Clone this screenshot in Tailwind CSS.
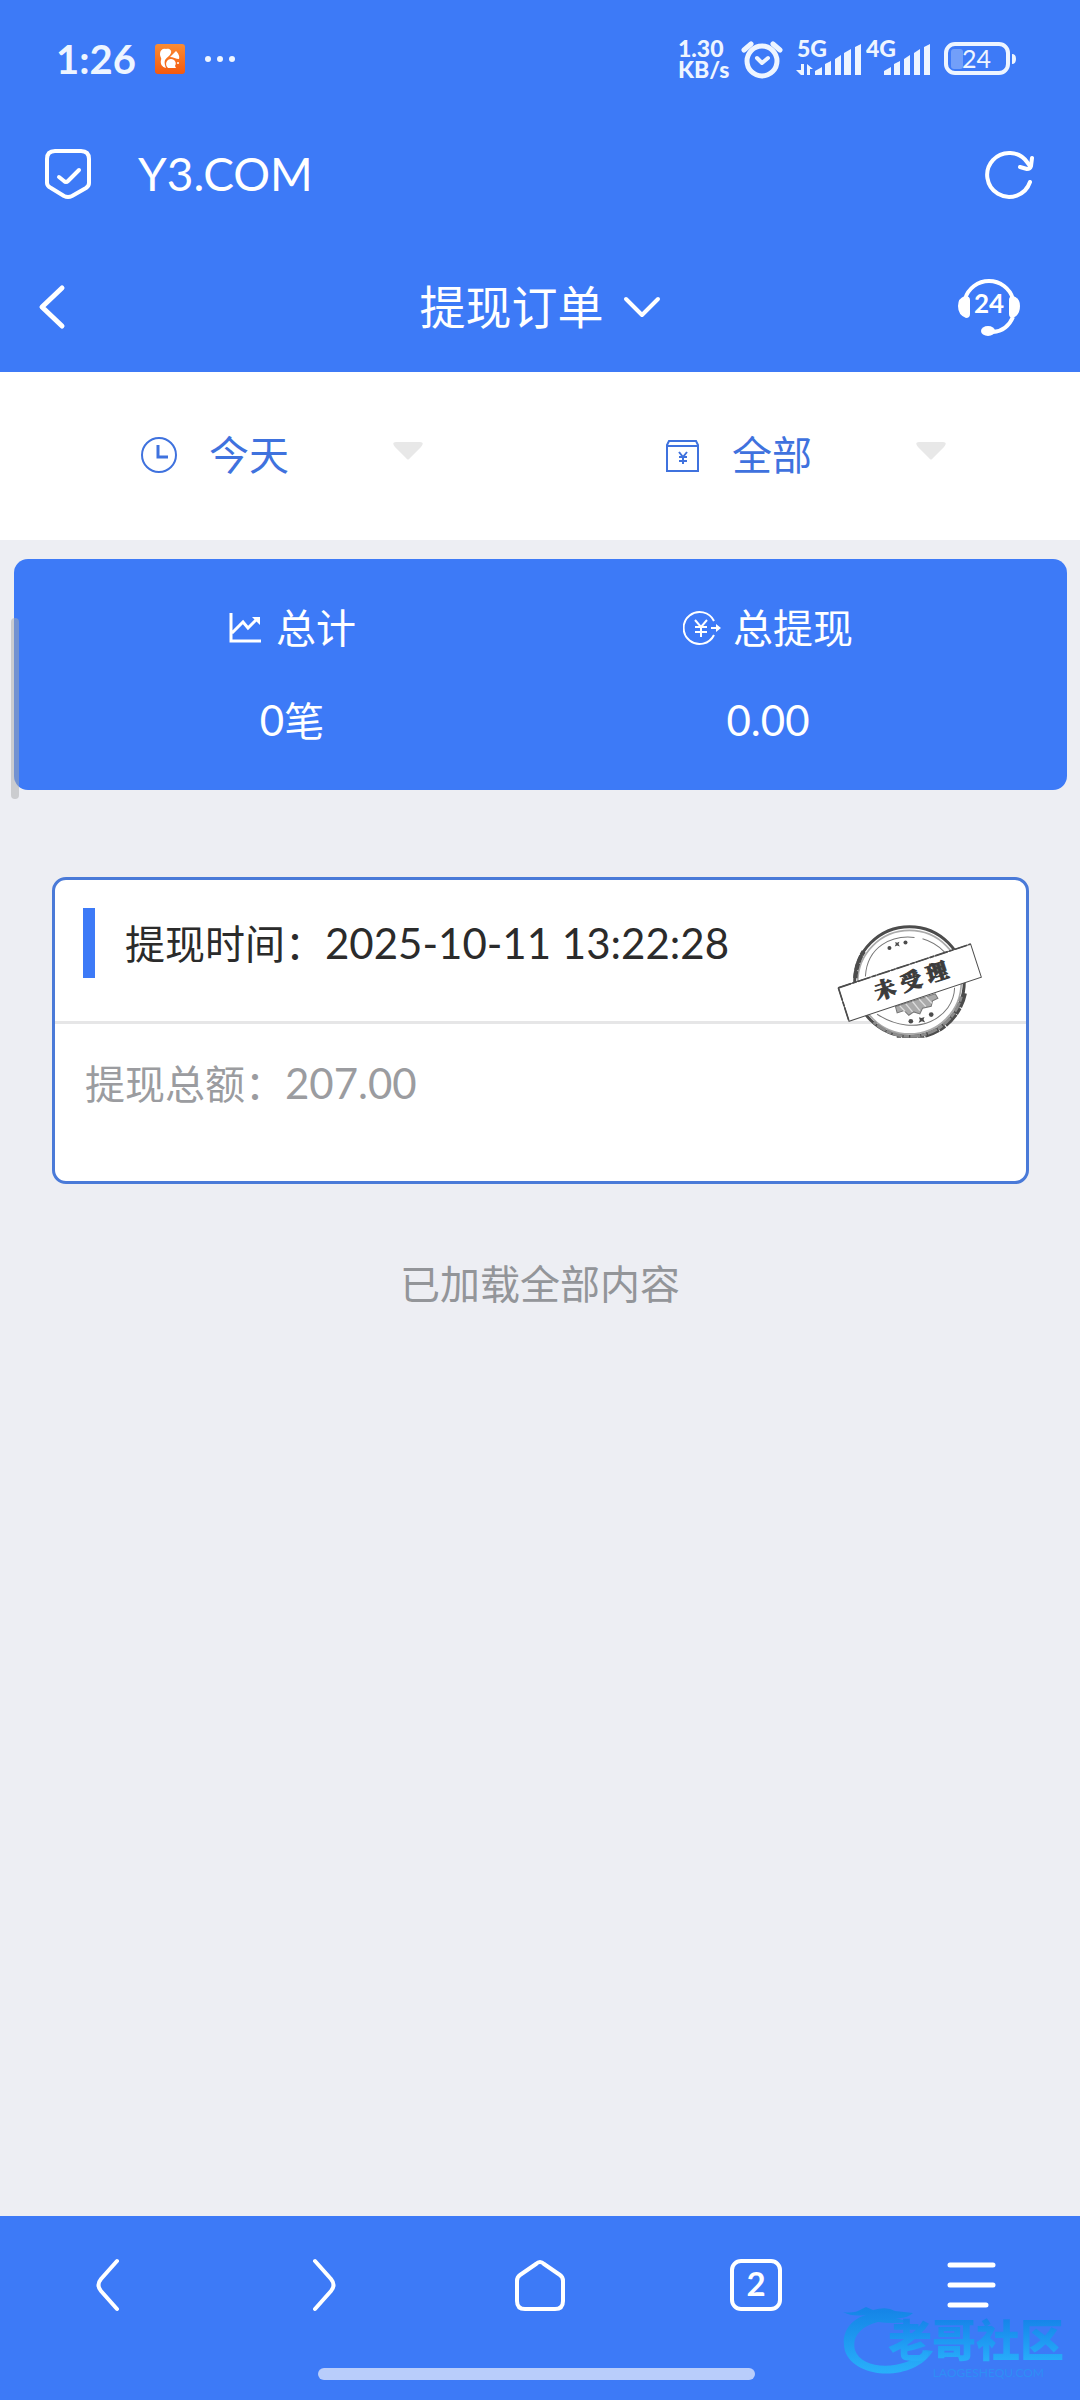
<!DOCTYPE html>
<html lang="zh-CN">
<head>
<meta charset="utf-8">
<meta name="viewport" content="width=device-width, initial-scale=1">
<title>提现订单</title>
<script src="https://cdn.jsdelivr.net/npm/@tailwindcss/browser@4"></script>
</head>
<body class="flex min-h-screen flex-col bg-[#edeef3] font-[Lato,'Noto_Sans_CJK_SC',sans-serif] text-[40px] leading-[60px] text-white">

<header class="bg-[#3d7af7]">
  <!-- status bar -->
  <div class="flex h-[118px] items-center pl-[56px] pr-[64px] text-[#eef5ff]">
    <time class="w-[77px] text-[40px] font-bold">1:26</time>
    <svg class="ml-[22px] size-[30px]" viewBox="0 0 30 30" aria-hidden="true">
      <defs><linearGradient id="uc" x1="0" y1="0" x2="0" y2="1"><stop offset="0" stop-color="#fb8c33"/><stop offset="1" stop-color="#f4590f"/></linearGradient></defs>
      <rect width="30" height="30" rx="3" fill="url(#uc)"/>
      <path d="M5 10C5 6 8 4 11 5C14 4 17 6 16 9C15 12 12 13 10 16C9 19 10 21 11 24C7 23 5 20 6 16C7 14 5 13 5 10Z" fill="#fff"/>
      <path d="M15 13L21 7C23 9 25 12 24 15C21 15 18 13 15 13Z" fill="#fff"/>
      <path d="M13 24C9 20 12 15 16 15C20 15 22 19 20 22L21 24Z" fill="#fff"/>
      <circle cx="23" cy="19" r="1" fill="#fff"/>
    </svg>
    <svg class="ml-[19px] h-[8px] w-[32px]" viewBox="0 0 32 8" fill="currentColor" aria-hidden="true"><circle cx="4" cy="4" r="3"/><circle cx="16" cy="4" r="3"/><circle cx="28" cy="4" r="3"/></svg>
    <div class="ml-auto w-[62px] text-[23px] leading-[21px] font-black">1.30<br>KB/s</div>
    <svg class="h-[42px] w-[44px]" viewBox="0 0 44 42" fill="none" stroke="currentColor" stroke-width="5" stroke-linecap="round" stroke-linejoin="round" aria-label="闹钟"><circle cx="22" cy="23" r="15"/><path d="M17 20L22 25L28 20" stroke-width="4"/><path d="M4 12L11 6M40 12L33 6"/></svg>
    <svg class="ml-[12px] h-[58px] w-[68px]" viewBox="0 -8 68 58" fill="currentColor" aria-label="5G 信号">
      <text x="1" y="19" font-size="23" font-weight="900">5G</text>
      <path d="M5 26H8V37H5L0 32L5 32ZM11 26L17 31H14V37H11Z"/>
      <path d="M19 33L26 29V37H19ZM29 26L35 23V37H29ZM39 21L45 17V37H39ZM48 15L55 11V37H48ZM59 9L65 6V37H59Z"/>
    </svg>
    <svg class="ml-[2px] h-[58px] w-[66px]" viewBox="0 -8 66 58" fill="currentColor" aria-label="4G 信号">
      <text x="0" y="19" font-size="23" font-weight="900">4G</text>
      <path d="M18 33L25 29V37H18ZM28 26L34 23V37H28ZM38 21L44 17V37H38ZM48 15L54 11V37H48ZM58 9L64 6V37H58Z"/>
    </svg>
    <svg class="ml-[12px] h-[42px] w-[72px]" viewBox="0 0 72 42" fill="currentColor" aria-label="电量 24%">
      <rect x="2" y="6" width="62" height="29" rx="9" fill="none" stroke="currentColor" stroke-width="4"/>
      <rect x="7" y="11" width="12" height="20" rx="3" opacity=".3"/>
      <path d="M68 16Q72 16 72 21Q72 26 68 26Z"/>
      <text x="18" y="30" font-size="25">24</text>
    </svg>
  </div>
  <!-- address row -->
  <div class="flex h-[112px] items-center pl-[44px] pr-[46px]">
    <svg class="h-[54px] w-[50px]" viewBox="0 0 50 54" fill="none" stroke="currentColor" stroke-width="4" stroke-linecap="round" stroke-linejoin="round" aria-hidden="true"><path d="M11 4H37Q45 4 45 12V36Q45 39 42 41L28 49Q24 51 20 49L7 41Q3 39 3 36V12Q3 4 11 4Z"/><path d="M15 30L20 34Q22 36 24 34L35 23"/></svg>
    <span class="ml-[44px] text-[46px]">Y3.COM</span>
    <button class="ml-auto" aria-label="刷新"><svg class="size-[52px]" viewBox="0 0 52 52" fill="none" stroke="currentColor" stroke-width="4" stroke-linecap="round" stroke-linejoin="round"><path d="M48 34A22 22 0 1 1 45 14L48 18"/><path d="M50 10L49 18Q48 21 45 21L38 19"/></svg></button>
  </div>
  <!-- page title row -->
  <div class="flex h-[142px] items-center justify-between pt-3 pl-[36px] pr-[58px]">
    <button class="w-[66px]" aria-label="返回"><svg class="h-[48px] w-[32px]" viewBox="0 0 32 48" fill="none" stroke="currentColor" stroke-width="5" stroke-linecap="round" stroke-linejoin="round"><path d="M26 5L6 24L26 43"/></svg></button>
    <h1 class="ml-[22px]"><button class="flex items-center gap-[19px] text-[46px]">提现订单<svg class="h-[24px] w-[38px]" viewBox="0 0 38 24" fill="none" stroke="currentColor" stroke-width="4" stroke-linecap="round" stroke-linejoin="round" aria-hidden="true"><path d="M3 4L19 20L35 4"/></svg></button></h1>
    <button aria-label="24小时客服"><svg class="h-[64px] w-[66px]" viewBox="0 0 66 64" fill="currentColor">
      <path d="M9 24A25 25 0 0 1 57 24M57 42Q51 56 37 57" fill="none" stroke="currentColor" stroke-width="4"/>
      <path d="M9 21Q14 21 14 25V39Q14 43 10 43Q2 40 2 31Q2 23 9 21ZM57 21Q64 23 64 31Q64 40 57 43Q53 43 53 39V25Q53 21 57 21Z"/>
      <ellipse cx="32" cy="56" rx="7" ry="5"/>
      <text x="33" y="38" font-size="26" font-weight="700" text-anchor="middle">24</text>
    </svg></button>
  </div>
</header>

<main class="flex-1">
  <form class="grid h-[168px] grid-cols-2 bg-white px-[17px] pt-[53px] text-[#3f72de]">
    <label class="flex h-[60px] items-center pl-[122px]">
      <svg class="size-[40px]" viewBox="0 0 40 40" fill="none" stroke="currentColor" stroke-width="2" aria-hidden="true"><circle cx="20" cy="20" r="17"/><path d="M19 10V22H29" stroke-width="3"/></svg>
      <select aria-label="时间" class="ml-[30px] w-[183px] appearance-none bg-transparent outline-none"><option>今天</option></select>
      <svg class="mb-[8px] h-[20px] w-[32px]" viewBox="0 0 32 20" fill="#e8e8e8" aria-hidden="true"><path d="M4 1H28Q33 1 29 6L18 17Q16 20 14 17L3 6Q-1 1 4 1Z"/></svg>
    </label>
    <label class="flex h-[60px] items-center pl-[122px]">
      <svg class="size-[40px]" viewBox="0 0 40 40" fill="none" stroke="currentColor" stroke-width="2" aria-hidden="true"><path d="M7 6H34L36 10V36H5V10ZM5 11H36"/><path d="M17 17L21 22L25 17M21 22V29M17 22H25M17 26H25" stroke-width="2"/></svg>
      <select aria-label="类型" class="ml-[30px] w-[183px] appearance-none bg-transparent outline-none"><option>全部</option></select>
      <svg class="mb-[8px] h-[20px] w-[32px]" viewBox="0 0 32 20" fill="#e8e8e8" aria-hidden="true"><path d="M4 1H28Q33 1 29 6L18 17Q16 20 14 17L3 6Q-1 1 4 1Z"/></svg>
    </label>
  </form>

  <section class="relative mr-[13px] ml-[14px] mt-[19px] grid h-[231px] grid-cols-2 rounded-[14px] bg-[#3d7af7] pt-[39px] pr-[61px] pl-[40px] text-center">
    <div class="flex flex-col gap-[32px]">
      <h2 class="flex items-center justify-center gap-[14px]">
        <svg class="size-[34px]" viewBox="0 0 34 34" fill="none" stroke="currentColor" stroke-width="3" aria-hidden="true"><path d="M3 2V30H33M4 22L15 11L20 17L29 8"/><path d="M24 6H32V14Z" fill="currentColor" stroke="none"/></svg>总计</h2>
      <p><span class="text-[42px]">0</span>笔</p>
    </div>
    <div class="flex flex-col gap-[32px]">
      <h2 class="flex items-center justify-center gap-[12px]">
        <svg class="size-[38px]" viewBox="0 0 38 38" fill="none" stroke="currentColor" stroke-width="3" aria-hidden="true"><path d="M31 12A16 16 0 1 0 31 26" stroke-width="2"/><path d="M12 11L18 18L24 11M18 18V28M12 18H24M12 23H24M28 19H36" stroke-width="2"/><path d="M33 15L38 19L33 23Z" fill="currentColor" stroke="none"/></svg>总提现</h2>
      <p class="text-[42px]">0.00</p>
    </div>
    <!-- scroll indicator over the card's left edge -->
    <span class="absolute top-[59px] -left-[3px] h-[181px] w-[8px] rounded-full bg-[#a9a9ab]/50"></span>
  </section>

  <article class="relative mr-[51px] ml-[52px] mt-[87px] h-[307px] rounded-[14px] border-[3px] border-[#4a7ad8] bg-white">
    <div class="flex h-[144px] border-b-[3px] border-[#e6e6e7] pt-[28px] pl-[28px] text-[#2b2b2b]">
      <span class="h-[70px] w-[12px] bg-[#3d7af7]"></span>
      <p class="ml-[30px] leading-[70px]">提现时间：<span class="text-[42px]">2025-10-11 13:22:28</span></p>
    </div>
    <p class="pt-[29px] pl-[30px] text-[#9b9ca0]">提现总额：<span class="text-[42px]">207.00</span></p>
    <svg class="absolute top-[43px] right-[42px] h-[117px] w-[147px]" viewBox="110 190 440 350" fill="none" stroke="#4c4c4c" role="img" aria-label="未受理">
      <clipPath id="seal"><rect x="110" y="190" width="440" height="343"/></clipPath>
      <g clip-path="url(#seal)">
        <circle cx="327" cy="365" r="164" stroke-width="9" fill="#fff"/>
        <circle cx="327" cy="367" r="155" stroke-width="5" stroke="#aaa"/>
        <path d="M492 400A166 166 0 0 1 290 528" stroke-width="14" stroke-dasharray="44 3 20 2"/>
        <path d="M482 410A158 158 0 0 1 220 486" stroke-width="9" stroke="#8b8b8b" stroke-dasharray="16 3 30 4"/>
        <path d="M165 355A163 163 0 0 1 190 275" stroke-width="13" stroke-dasharray="22 2"/>
        <path d="M195 350C200 260 275 225 342 233M366 237Q405 248 432 277M462 384C460 470 350 540 230 463" stroke-width="3" stroke="#777"/>
        <path d="M285 440L290 459L311 452L325 466L340 456L358 462L366 445L392 439L396 423L412 415L404 402Z" fill="#aaa" stroke-width="3" stroke="#777"/>
        <path d="M298 438L314 455M316 432L336 456M336 425L358 452M356 418L376 440M375 410L394 430" stroke="#ddd" stroke-width="4"/>
        <g fill="#4c4c4c" stroke="none"><circle cx="267" cy="265" r="6"/><path d="M284 247L290 249L297 246L294 253L298 260L290 257L283 260L286 253Z"/><circle cx="315" cy="248" r="6"/><circle cx="331" cy="484" r="7"/><path d="M355 472L363 474L372 471L369 479L374 488L364 484L354 489L358 480Z"/><circle cx="392" cy="464" r="7"/></g>
      </g>
      <path d="M114 384L510 253L542 352L146 484Z" fill="#fff" stroke-width="3"/>
      <path d="M114 384L510 253M114 384L146 484" stroke-width="5" stroke-dasharray="40 4 14 3"/>
      <text transform="translate(332 364) rotate(-18)" x="-82 0 82" y="22" text-anchor="middle" font-family="'Noto Serif CJK SC','Noto Sans CJK SC',serif" font-size="64" font-weight="900" fill="#3c3c3c" stroke="#3c3c3c" stroke-width="3">未受理</text>
    </svg>
  </article>

  <p class="mt-[70px] text-center text-[#939599]">已加载全部内容</p>
</main>

<footer class="relative h-[184px] bg-[#3d7af7] pt-[39px]">
  <nav class="grid grid-cols-5 justify-items-center">
    <button aria-label="后退"><svg class="size-[60px]" viewBox="0 0 60 60" fill="none" stroke="currentColor" stroke-width="4" stroke-linecap="round"><path d="M39 6L23 24Q18 30 23 36L39 54"/></svg></button>
    <button aria-label="前进"><svg class="size-[60px]" viewBox="0 0 60 60" fill="none" stroke="currentColor" stroke-width="4" stroke-linecap="round"><path d="M21 6L37 24Q42 30 37 36L21 54"/></svg></button>
    <button aria-label="主页"><svg class="size-[60px]" viewBox="0 0 60 60" fill="none" stroke="currentColor" stroke-width="4" stroke-linejoin="round"><path d="M26 9Q30 5 34 9L50 20Q53 22 53 26V46Q53 54 45 54H15Q7 54 7 46V26Q7 22 10 20Z"/></svg></button>
    <button aria-label="标签页"><svg class="size-[60px]" viewBox="0 0 60 60" fill="none" stroke="currentColor" stroke-width="4"><rect x="6" y="6" width="48" height="48" rx="9"/><text x="30" y="41" font-size="33" font-weight="700" text-anchor="middle" fill="currentColor" stroke="none">2</text></svg></button>
    <button aria-label="菜单"><svg class="size-[60px]" viewBox="0 0 60 60" fill="none" stroke="currentColor" stroke-width="5" stroke-linecap="round"><path d="M8 10H51M8 30H51M8 50H44"/></svg></button>
  </nav>
  <div class="mt-[53px] flex justify-center pr-[8px]"><div class="h-[12px] w-[437px] rounded-full bg-[#b9cdfb]"></div></div>

  <!-- community watermark -->
  <div class="absolute right-[16px] bottom-[24px] h-[72px] w-[222px]">
    <svg class="absolute inset-0 h-[72px] w-[100px]" viewBox="0 0 100 72" aria-hidden="true">
      <defs><linearGradient id="wm" x1="0" y1="0" x2="0" y2="1"><stop offset="0" stop-color="#1483e6"/><stop offset="1" stop-color="#29b0fb"/></linearGradient></defs>
      <path d="M1 8Q12 10 20 5L24 3L31 6Q45 2 53 7L71 9Q65 15 54 14L67 18Q50 20 36 18C16 23 10 35 13 46C19 66 62 68 83 46L91 47C72 78 13 76 3 47C-2 29 9 15 24 11Q10 13 1 8Z" fill="url(#wm)"/>
    </svg>
    <span class="absolute top-[12px] right-0 bg-linear-to-b from-[#1681e8] to-[#29b0fb] bg-clip-text text-[44px] leading-[48px] font-black whitespace-nowrap text-transparent">老哥社区</span>
    <span class="absolute right-[20px] -bottom-[4px] text-[12px] leading-[14px] text-[#2f8ef5]">LAOGESHEQU.COM</span>
  </div>
</footer>
</body>
</html>
